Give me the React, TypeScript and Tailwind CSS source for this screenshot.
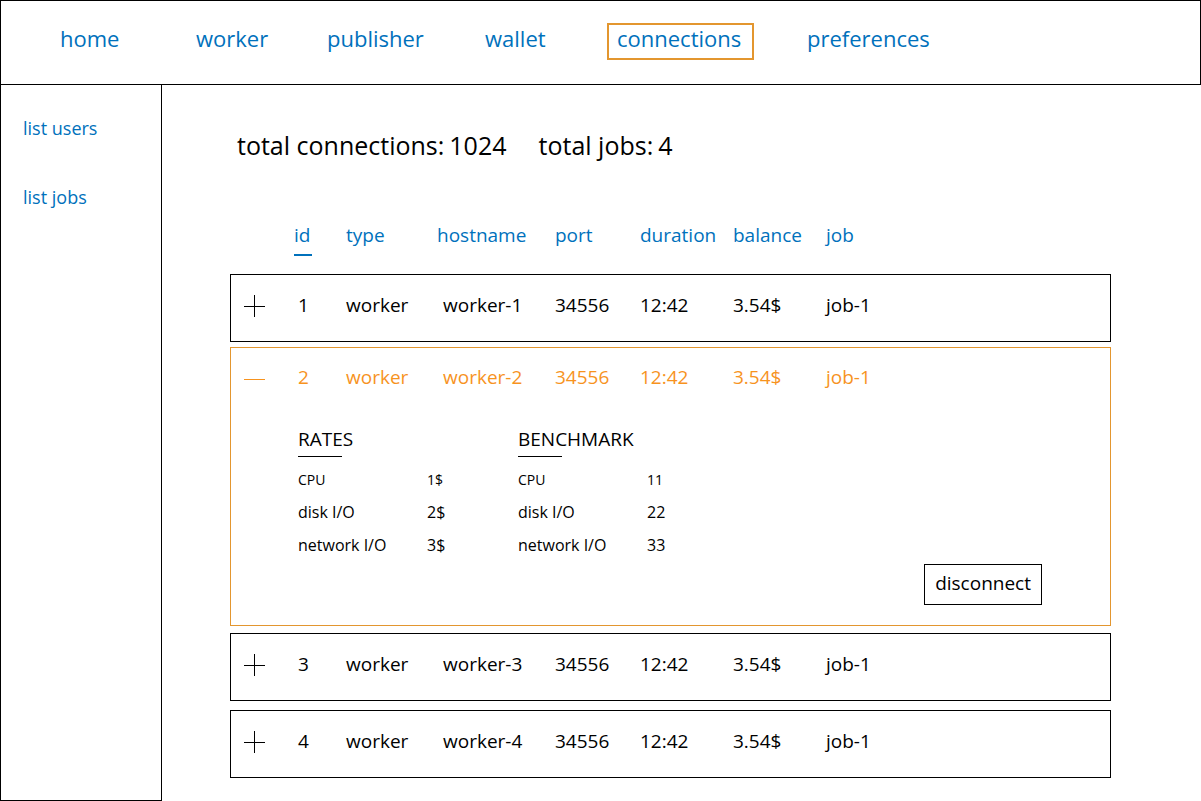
import { useState } from "react";

type Metric = { name: string; value: string; small?: boolean };

type Connection = {
  id: number;
  type: string;
  hostname: string;
  port: string;
  duration: string;
  balance: string;
  job: string;
};

const navItems = ["home", "worker", "publisher", "wallet", "connections", "preferences"];

const columns = ["id", "type", "hostname", "port", "duration", "balance", "job"];

const connections: Connection[] = [1, 2, 3, 4].map((id) => ({
  id,
  type: "worker",
  hostname: `worker-${id}`,
  port: "34556",
  duration: "12:42",
  balance: "3.54$",
  job: "job-1",
}));

const rates: Metric[] = [
  { name: "CPU", value: "1$", small: true },
  { name: "disk I/O", value: "2$" },
  { name: "network I/O", value: "3$" },
];

const benchmark: Metric[] = [
  { name: "CPU", value: "11", small: true },
  { name: "disk I/O", value: "22" },
  { name: "network I/O", value: "33" },
];

const rowGrid = "grid grid-cols-[63px_52px_91px_118px_85px_93px_93px_1fr]";

function ToggleIcon({ open }: { open: boolean }) {
  return (
    <svg width="22" height="24" viewBox="0 0 22 24" aria-hidden="true">
      {open ? (
        <rect x="0" y="14" width="21" height="1" fill="#f7931e" />
      ) : (
        <>
          <rect x="0" y="13" width="21" height="1" fill="#000000" />
          <rect x="10" y="2" width="1" height="22" fill="#000000" />
        </>
      )}
    </svg>
  );
}

function Metrics({ title, items }: { title: string; items: Metric[] }) {
  return (
    <section>
      <h2 className="text-[19px] leading-6">{title}</h2>
      <div className="mt-[5px] mb-1.5 w-11 border-t border-black" />
      <table>
        <tbody>
          {items.map((item) => (
            <tr key={item.name} className={item.small ? "text-sm/[33px]" : "text-base/[33px]"}>
              <th scope="row" className="w-[129px] text-left font-normal">
                {item.name}
              </th>
              <td>{item.value}</td>
            </tr>
          ))}
        </tbody>
      </table>
    </section>
  );
}

function ConnectionRow({
  row,
  open,
  spacing,
  onToggle,
}: {
  row: Connection;
  open: boolean;
  spacing: string;
  onToggle: () => void;
}) {
  return (
    <tbody className={`block border ${open ? "border-[#e3962f]" : "border-black"} ${spacing}`}>
      <tr className={`${rowGrid} ${open ? "pt-[17px] text-[#f7931e]" : "pt-[18px] pb-6"}`}>
        <td className="pl-[13px]">
          <button
            type="button"
            className="block cursor-pointer"
            aria-expanded={open}
            aria-label={`Details of ${row.hostname}`}
            onClick={onToggle}
          >
            <ToggleIcon open={open} />
          </button>
        </td>
        <td className="pl-1">{row.id}</td>
        <td>{row.type}</td>
        <td className="pl-1.5">{row.hostname}</td>
        <td>{row.port}</td>
        <td>{row.duration}</td>
        <td>{row.balance}</td>
        <td>{row.job}</td>
      </tr>
      {open && (
        <tr className="block">
          <td colSpan={8} className="flex flex-col pt-[38px] pr-[68px] pb-5 pl-[67px]">
            <div className="grid grid-cols-[220px_1fr]">
              <Metrics title="RATES" items={rates} />
              <Metrics title="BENCHMARK" items={benchmark} />
            </div>
            <button
              type="button"
              className="mt-0.5 cursor-pointer self-end border border-black px-[10px] pt-1.5 pb-[9px]"
            >
              disconnect
            </button>
          </td>
        </tr>
      )}
    </tbody>
  );
}

export default function App() {
  const [openId, setOpenId] = useState<number | null>(2);

  const spacingAfter = (index: number) => {
    if (index === connections.length - 1) return "";
    if (connections[index].id === openId) return "mb-[7px]";
    return connections[index + 1].id === openId ? "mb-[5px]" : "mb-[9px]";
  };

  return (
    <div className="flex min-h-screen flex-col bg-white font-['Open_Sans','Noto_Sans',sans-serif] text-black">
      <header className="border border-black pt-[22px] pb-6">
        <nav className="grid grid-cols-[136px_131px_158px_132px_190px_1fr] pl-[49px] text-[22px] leading-[26px] text-[#0071bc]">
          {navItems.map((item) => (
            <a
              key={item}
              href={`#${item}`}
              aria-current={item === "connections" ? "page" : undefined}
              className={`justify-self-start border-2 pr-[11px] pb-[7px] pl-2 ${
                item === "connections" ? "border-[#e3962f]" : "border-transparent"
              }`}
            >
              {item}
            </a>
          ))}
        </nav>
      </header>

      <div className="flex grow">
        <aside className="w-[162px] shrink-0 border-x border-b border-black">
          <nav className="flex flex-col items-start gap-[45px] pt-[31px] pl-[22px] text-lg/6 text-[#0071bc]">
            <a href="#users">list users</a>
            <a href="#jobs">list jobs</a>
          </nav>
        </aside>

        <main className="grow pt-11 pr-[90px] pb-[23px] pl-[68px] text-[19px] leading-6">
          <div className="flex gap-8 pl-[7px] text-[25px] leading-8">
            <p className="flex gap-[5px]">
              <span>total connections:</span>
              <span>1024</span>
            </p>
            <p className="flex gap-[5px]">
              <span>total jobs:</span>
              <span>4</span>
            </p>
          </div>

          <table className="mt-[62px] block">
            <thead className="mb-[18px] block px-px text-[#0071bc]">
              <tr className={rowGrid}>
                <td />
                {columns.map((column) => (
                  <th key={column} scope="col" className="text-left font-normal">
                    <button
                      type="button"
                      className={`block cursor-pointer border-b-2 pr-0.5 pb-[7px] ${
                        column === "id" ? "border-[#0071bc]" : "border-transparent"
                      }`}
                    >
                      {column}
                    </button>
                  </th>
                ))}
              </tr>
            </thead>
            {connections.map((row, index) => (
              <ConnectionRow
                key={row.id}
                row={row}
                open={row.id === openId}
                spacing={spacingAfter(index)}
                onToggle={() => setOpenId(row.id === openId ? null : row.id)}
              />
            ))}
          </table>
        </main>
      </div>
    </div>
  );
}
